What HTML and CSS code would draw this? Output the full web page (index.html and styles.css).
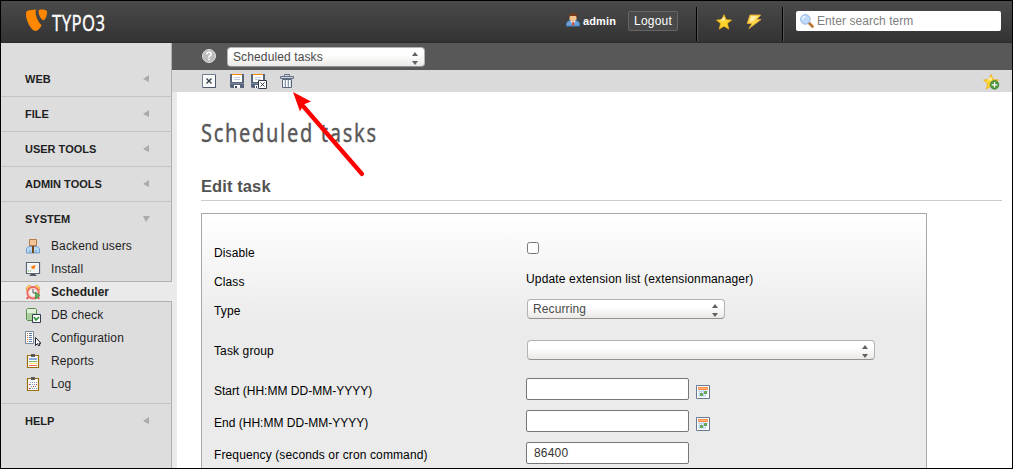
FILE: index.html
```html
<!DOCTYPE html>
<html lang="en">
<head>
<meta charset="utf-8">
<title>TYPO3 - Scheduled tasks</title>
<link rel="stylesheet" href="styles.css">
</head>
<body>
<div class="frame">
  <header class="topbar">
    <div class="logo">
      <svg class="logo-mark" width="22" height="23" viewBox="0 0 22 23"><path fill="#ff8700" d="M10.6.6C9.8 1.200 9.600 2.200 9.600 3.700c0 4 3.500 10.500 6 12.600-1.500 3-3.800 5.700-6 5.700C5 22 0 11.500 0 5.500c0-2 .3-2.800.9-3.400C2.500 1.300 7 .7 10.600.6zM12.500 2.500c0-1.300.5-2 2-2 3.500 0 6.600.6 6.600 2.500 0 3.500-2 8.300-3.700 8.300-2 0-4.900-5.600-4.900-8.800z"/></svg>
      <span class="logo-name">TYPO3</span>
    </div>
    <div class="user">
      <svg width="14" height="14" viewBox="0 0 14 14"><path d="M.5 13v-2.500Q1 8 4.500 7.500h5Q13 8 13.500 10.500V13z" fill="#6ba2da" stroke="#4a82bd"/><path d="M4.500 8h5L7 12z" fill="#eaf3ff"/><path d="M6.500 8.500h1.300l.5 3L7 13l-1-1.500z" fill="#e24830"/><path d="M3.500 3h7v3.300q-1 2.200-3.500 2.200T3.500 6.300z" fill="#f1c08b"/><path d="M3 5V2q1-2 4-2t4 2v3l-1-2.200H4z" fill="#7b3a16"/></svg>
      <span class="user-name">admin</span>
      <button class="logout">Logout</button>
    </div>
    <div class="shortcuts">
      <svg width="16" height="16" viewBox="0 0 16 16"><path d="M8 .7l2.100 5 5.400.4-4.100 3.500 1.400 5.500L8 12.200l-4.800 2.900 1.400-5.500L.5 6.100l5.400-.4z" fill="#ffd52e" stroke="#efad18" stroke-width=".8"/><path d="M8 2.500l1.400 4H4z" fill="#ffef96"/></svg>
      <svg width="16" height="16" viewBox="0 0 16 16"><path d="M4 1h10.500L10.800 5.500h4.200L3 14.500 6 9.500H1.200z" fill="#ffd84c" stroke="#dea83b"/><path d="M5 2.300h6.500L7.500 6.500 3.500 8z" fill="#ffeeae"/></svg>
    </div>
    <label class="search">
      <svg width="14" height="14" viewBox="0 0 14 14"><path d="M9 9l3.500 3.500" stroke="#b97632" stroke-width="2.600" stroke-linecap="round"/><circle cx="5.400" cy="5.400" r="4.800" fill="#c0dafa" stroke="#93b6df"/><path d="M2.500 5.500q0-3 3-3" stroke="#edf6ff" stroke-width="1.500" fill="none"/></svg>
      <input type="text" placeholder="Enter search term">
    </label>
  </header>

  <div class="body">
    <nav class="menu">
      <div class="group"><span>WEB</span><i class="arrow left"></i></div>
      <div class="group"><span>FILE</span><i class="arrow left"></i></div>
      <div class="group"><span>USER TOOLS</span><i class="arrow left"></i></div>
      <div class="group"><span>ADMIN TOOLS</span><i class="arrow left"></i></div>
      <div class="group open"><span>SYSTEM</span><i class="arrow down"></i></div>
      <ul class="modules">
        <li><svg width="16" height="16" viewBox="0 0 16 16"><path d="M1.500 15V10.500l2-2h9l2 2V15z" fill="#b6d8f4" stroke="#729fc9"/><path d="M7 8h2v7H7z" fill="#754813"/><path d="M4.500 1.500h7v6h-7z" fill="#f1c597" stroke="#b87b45"/><path d="M5 12v3M11 12v3" stroke="#729fc9"/></svg>Backend users</li>
        <li><svg width="16" height="16" viewBox="0 0 16 16"><path d="M1.500 1.500h13v11h-13z" fill="#fff" stroke="#596275" stroke-width="1.200"/><path d="M3 3h10v8H3z" fill="#eef2f5"/><path d="M6 5.500l4.500-1.500-1.200 4.500-1.300-1.500-1 1.500-.5-2z" fill="#ff7900"/><path d="M3 10h1M5 10h1" stroke="#60b342"/><path d="M6 13h4l2 2H4z" fill="#525a65"/></svg>Install</li>
        <li class="current"><svg width="16" height="16" viewBox="0 0 16 16"><path d="M1 4l3-3 3 2-5 4zM15 4l-3-3-3 2 5 4z" fill="#ffd36e" stroke="#db982c" stroke-width=".7"/><path d="M3 13l-1 2M13 13l1 2" stroke="#d65449" stroke-width="2"/><circle cx="8" cy="8.700" r="5.700" fill="#fff" stroke="#ed6a60" stroke-width="2"/><circle cx="8" cy="8.700" r="4.300" fill="#f4f2ee" stroke="#f6b5ad" stroke-width=".7"/><path d="M8 5v4h3" fill="none" stroke="#50545d"/><path d="M10.500 8l4.500 3.500-4.500 3.500z" fill="#63b05d" stroke="#338d3b" stroke-width=".7"/></svg>Scheduler</li>
        <li><svg width="16" height="16" viewBox="0 0 16 16"><path d="M1.500 2.500l1-1h8l1 1v11H2.500l-1-1z" fill="#abcf9b" stroke="#5c8e4f"/><path d="M2 2h9v4H2z" fill="#dfefda"/><path d="M7.500 7.500h8v8h-8z" fill="#fff" stroke="#343d4d"/><path d="M9 10l2 3 3-3" stroke="#279234" stroke-width="1.500" fill="none"/></svg>DB check</li>
        <li><svg width="16" height="16" viewBox="0 0 16 16"><path d="M.5 1.500h8v12h-8z" fill="#fff" stroke="#7c879d"/><path d="M2 3.500h1M2 5.500h1M2 7.500h1M2 9.500h1M2 11.500h1" stroke="#e98127"/><path d="M4 3.500h3M4 5.500h3M4 7.500h3M4 9.500h3M4 11.500h3" stroke="#647ba9"/><path d="M10.500 7.500v8l2-2 1 2.500 1.500-.7-1-2h2z" fill="#fff" stroke="#202531"/></svg>Configuration</li>
        <li><svg width="16" height="16" viewBox="0 0 16 16"><path d="M2.500 2.500h11v12h-11z" fill="#fff" stroke="#9a6f0d" stroke-width="1.200"/><path d="M6 1h4v3H6z" fill="#565a5c"/><path d="M4 6h8" stroke="#8eabe0" stroke-width="2"/><path d="M4 8.500h8" stroke="#70b469"/><path d="M4 10.500h8" stroke="#ffe067"/><path d="M4 12.500h8" stroke="#ee6758"/></svg>Reports</li>
        <li><svg width="16" height="16" viewBox="0 0 16 16"><path d="M2.500 2.500h11v12h-11z" fill="#fff" stroke="#9a6f0d" stroke-width="1.200"/><path d="M6 1h4v3H6z" fill="#565a5c"/><path d="M5 6.500h7M5 8.500h5M6 10.500h6M5 12.500h7" stroke="#8293ae" stroke-dasharray="1 1"/><path d="M4 8.500h1M4 12.500h1M11 8.500h1M8 10.500h1" stroke="#db2821"/></svg>Log</li>
      </ul>
      <div class="group help"><span>HELP</span><i class="arrow left"></i></div>
    </nav>

    <main class="module">
      <div class="bar bar-select">
        <svg width="14" height="14" viewBox="0 0 14 14"><circle cx="7" cy="7" r="6.500" fill="#bdbdbd" stroke="#dedede"/><path d="M4.800 5.300q0-2 2.200-2t2.200 1.800Q9.200 6.500 7 7.500v1M7 9.600v1.600" fill="none" stroke="#fff" stroke-width="1.500"/></svg>
        <div class="select function"><span>Scheduled tasks</span><i class="spin"></i></div>
      </div>
      <div class="bar bar-buttons">
        <svg class="close" width="14" height="14" viewBox="0 0 14 14"><path d="M.5.5h13v13H.5z" fill="#f9fafb" stroke="#737e94"/><path d="M13.500 1v12.500H1" fill="none" stroke="#4d586d"/><path d="M4.500 4.500l5 5M9.500 4.500l-5 5" stroke="#363d49" stroke-width="1.300"/></svg>
        <svg class="save" width="14" height="14" viewBox="0 0 14 14"><path d="M0 0h14v14H1l-1-1z" fill="#59657b"/><path d="M2 0h10v8H2z" fill="#fff"/><path d="M2 .5h10" stroke="#ff8700"/><path d="M4 3.500h6M4 5.500h6" stroke="#c1cad8"/><path d="M4 11h6v3H4z" fill="#fff"/><path d="M5 12h2v2H5z" fill="#39455a"/><path d="M0 9.500h14" stroke="#7986a0"/></svg>
        <svg class="save-close" width="16" height="15" viewBox="0 0 16 15"><path d="M0 0h14v14H1l-1-1z" fill="#59657b"/><path d="M2 0h10v8H2z" fill="#fff"/><path d="M2 .5h10" stroke="#ff8700"/><path d="M4 3.500h6M4 5.500h6" stroke="#c1cad8"/><path d="M4 11h5v3H4z" fill="#fff"/><path d="M5 12h1v2H5z" fill="#39455a"/><path d="M0 9.500h8" stroke="#7986a0"/><path d="M7.500 6.500h8v8h-8z" fill="#fff" stroke="#343d4d"/><path d="M9.500 8.500l4 4M13.500 8.500l-4 4" stroke="#343d4d"/></svg>
        <svg class="trash" width="14" height="14" viewBox="0 0 14 14"><path d="M4.500 2V.5h5V2" fill="none" stroke="#626f87"/><path d="M.5 2.500h13v2H.5z" fill="#c8d0dc" stroke="#647189"/><path d="M2.500 5.500h9v8h-9z" fill="#fff" stroke="#59657b"/><path d="M5.500 6v7M8.500 6v7" stroke="#8d98aa"/><path d="M4.500 6v7M7.500 6v7M10.500 6v7" stroke="#d9dfe7"/></svg>
        <svg class="bookmark" width="17" height="16" viewBox="0 0 17 16"><path d="M8 .6l2.100 5 5.400.4-4.100 3.500 1.400 5.500L8 12.200 3.200 15l1.400-5.500L.5 6l5.400-.4z" fill="#ffd52e" stroke="#efad18" stroke-width=".8"/><path d="M8 2.500l1.400 4H4z" fill="#ffef96"/><circle cx="11.500" cy="10.800" r="4.400" fill="#4f963f" stroke="#3c792f" stroke-width=".6"/><path d="M11.500 8v5.600M8.700 10.800h5.600" stroke="#fff" stroke-width="1.300"/></svg>
      </div>
      <section class="content">
        <h1><span>Scheduled tasks</span></h1>
        <h2>Edit task</h2>
        <form class="panel">
          <div class="row"><label>Disable</label><div class="cell"><input class="check" type="checkbox"></div></div>
          <div class="row"><label>Class</label><div class="cell"><span class="class-name">Update extension list (extensionmanager)</span></div></div>
          <div class="row type"><label>Type</label><div class="cell"><div class="select"><span>Recurring</span><i class="spin"></i></div></div></div>
          <div class="row tall task-group"><label>Task group</label><div class="cell"><div class="select wide"><span></span><i class="spin"></i></div></div></div>
          <div class="row tall"><label class="date">Start (HH:MM DD-MM-YYYY)</label><div class="cell"><input class="field" type="text"><svg class="calendar" width="14" height="14" viewBox="0 0 14 14"><path d="M.5.5h13v13H.5z" fill="#fff" stroke="#667792"/><path d="M2 6.500h10M2 8.500h10M2 10.500h8M3.500 5v7M5.500 5v7M7.500 5v7M9.500 5v7" stroke="#bad6f6"/><path d="M2 2h10v3H2z" fill="#ff8a46"/><path d="M2 3.500h10" stroke="#ffb27f"/><path d="M8 6h3v3H8zM4 8h3v3H4z" fill="#65aa57"/></svg></div></div>
          <div class="row tall"><label class="date">End (HH:MM DD-MM-YYYY)</label><div class="cell"><input class="field" type="text"><svg class="calendar" width="14" height="14" viewBox="0 0 14 14"><path d="M.5.5h13v13H.5z" fill="#fff" stroke="#667792"/><path d="M2 6.500h10M2 8.500h10M2 10.500h8M3.500 5v7M5.500 5v7M7.500 5v7M9.500 5v7" stroke="#bad6f6"/><path d="M2 2h10v3H2z" fill="#ff8a46"/><path d="M2 3.500h10" stroke="#ffb27f"/><path d="M8 6h3v3H8zM4 8h3v3H4z" fill="#65aa57"/></svg></div></div>
          <div class="row tall"><label>Frequency (seconds or cron command)</label><div class="cell"><input class="field" type="text" value="86400"></div></div>
        </form>
      </section>
      <svg class="pointer" width="76" height="88" viewBox="0 0 76 88"><path d="M11 14L70 82" stroke="#f00" stroke-width="4.200" stroke-linecap="round"/><path d="M1 0L19 9.500 11.500 12.500 8 19.500z" fill="#f00"/></svg>
    </main>
  </div>
</div>
</body>
</html>
```
FILE: styles.css
```css
* { box-sizing: border-box; }
body {
  margin: 0;
  overflow: hidden;
  font: 12px/16px "Liberation Sans", Arial, sans-serif;
  letter-spacing: .12px;
  color: #000;
}
svg { display: block; flex: none; }
.frame {
  display: flex;
  flex-direction: column;
  width: 1013px;
  height: 469px;
  border: 1px solid #000;
  overflow: hidden;
}

/* Top bar */
.topbar {
  display: flex;
  flex: none;
  align-items: flex-start;
  height: 42px;
  padding-left: 25px;
  background: linear-gradient(#4a4a4a, #343434 95%, #292929);
}
.logo { display: flex; width: 540px; padding-top: 8px; }
.logo-name {
  height: 28px;
  margin-left: 4px;
  font: 22.5px/28px "Noto Sans", sans-serif;
  letter-spacing: .6px;
  color: #fff;
  -webkit-text-stroke: .3px #fff;
  transform: scaleX(.74);
  transform-origin: 0 0;
}
.user { display: flex; width: 130px; padding-top: 10px; }
.user svg { margin-top: 2px; }
.user-name {
  width: 45px;
  margin-left: 3px;
  padding-top: 2px;
  font-size: 11px;
  font-weight: bold;
  color: #fff;
}
.logout {
  width: 50px;
  height: 20px;
  padding: 0;
  border: 1px solid #666;
  border-radius: 2px;
  background: #494949;
  color: #fff;
  font: 12px "Liberation Sans", sans-serif;
  letter-spacing: .2px;
}
.shortcuts {
  display: flex;
  gap: 14px;
  width: 87px;
  height: 34px;
  margin-top: 6px;
  padding: 7px 0 0 19px;
  border-left: 1px solid #000;
  border-right: 1px solid #000;
  box-shadow: inset 1px 0 #555, 1px 0 #555;
}
.search {
  display: flex;
  width: 205px;
  height: 20px;
  margin: 10px 0 0 13px;
  padding: 3px 4px;
  border-radius: 2px;
  background: #fff;
}
.search input {
  width: 170px;
  height: 14px;
  margin-left: 3px;
  padding: 0;
  border: 0;
  font: 12px "Liberation Sans", sans-serif;
  letter-spacing: .06px;
}
.search input::placeholder { color: #808080; }

/* Module menu */
.body { display: flex; flex: 1; min-height: 0; }
.menu {
  width: 171px;
  flex: none;
  padding-top: 19px;
  border-right: 1px solid #b0b0b0;
  background: #ddd;
}
.group {
  display: flex;
  align-items: center;
  justify-content: space-between;
  height: 35px;
  padding: 0 21px 0 24px;
  border-bottom: 1px solid #c3c3c3;
  color: #1f1f1f;
  font-size: 11px;
  font-weight: bold;
  letter-spacing: 0;
}
.group.open { height: 32px; padding-top: 2px; border-bottom: 0; }
.group.help { border-top: 1px solid #c3c3c3; border-bottom: 0; }
.arrow { width: 0; height: 0; }
.arrow.left { margin: 0 1px 2px 0; border: solid transparent; border-width: 4px 6px 3px 0; border-right-color: #aaa; }
.arrow.down { border: 4px solid transparent; border-top: 6px solid #aaa; border-bottom: 0; border-left-width: 3px; }
.modules {
  margin: 0;
  padding: 0;
  height: 169px;
  list-style: none;
}
.modules li {
  display: flex;
  align-items: center;
  gap: 10px;
  height: 23px;
  padding-left: 24px;
  color: #1f1f1f;
}
.modules .current {
  width: 171px;
  height: 21px;
  margin: 1px 0;
  border: solid #b0b0b0;
  border-width: 1px 0;
  background: #eaeaea;
  font-weight: bold;
  letter-spacing: 0;
}

/* Module area */
.module {
  position: relative;
  flex: 1;
  background: #fff;
}
.bar { display: flex; }
.bar-select { height: 27px; padding: 4px 0 0 30px; background: #585858; }
.bar-select > svg { margin: 2px 11px 0 0; }
.bar-buttons { height: 22px; padding: 4px 12px 0 30px; background: #dadada; }
.save { margin-left: 14px; }
.save-close { margin-left: 7px; }
.trash { margin-left: 13px; }
.bookmark { margin-left: auto; }
.select {
  display: flex;
  justify-content: space-between;
  width: 198px;
  height: 20px;
  padding: 1px 6px 0 5px;
  border: 1px solid #b5b3b0;
  border-bottom-color: #94918e;
  border-radius: 4px;
  background: linear-gradient(#fff 35%, #ebe9e7);
  color: #4a4a4a;
}
.select.wide { width: 348px; }
.spin {
  display: flex;
  flex-direction: column;
  justify-content: space-between;
  width: 6px;
  height: 13px;
  margin-top: 3px;
}
.spin::before { content: ""; border: 3px solid transparent; border-top: 0; border-bottom: 4px solid #606060; }
.spin::after { content: ""; border: 3px solid transparent; border-bottom: 0; border-top: 4px solid #606060; }

.content {
  height: 376px;
  padding: 24px 10px 0 24px;
  border-left: 5px solid #eaeaea;
  overflow: hidden;
}
h1 {
  height: 34px;
  margin: 0;
  color: #585858;
  font: 26px/32px "Noto Sans", sans-serif;
}
h1 span {
  display: inline-block;
  letter-spacing: 2.2px;
  white-space: nowrap;
  -webkit-text-stroke: .4px #585858;
  transform: scaleX(.77);
  transform-origin: 0 0;
}
h2 {
  height: 51px;
  margin: 0 0 12px;
  padding-top: 26px;
  border-bottom: 1px solid #ccc;
  color: #525252;
  font-size: 16.5px;
  line-height: 20px;
  letter-spacing: .1px;
}
.panel {
  width: 726px;
  height: 280px;
  padding: 24px 0 0 12px;
  border: 1px solid #a9a9a9;
  background: linear-gradient(#fff, #ebebeb 110px);
}
.row { display: flex; height: 29px; }
.row label { width: 312px; padding-top: 7px; }
.row label.date { letter-spacing: .01px; }
.row.tall { height: 32px; }
.row.task-group { margin: 10px 0 8px; }
.row.tall label { padding-top: 8px; }
.cell { display: flex; padding-top: 3px; }
.check { width: 12px; height: 12px; margin: 1px; }
.class-name { padding-top: 1px; letter-spacing: .15px; }
.row .select { margin-left: 1px; }
.task-group .cell { padding-top: 5px; }
.field {
  width: 163px;
  height: 22px;
  padding: 0 7px;
  border: 1px solid #777;
  border-radius: 2px;
  color: #333;
  background: #fff;
  font: 12px "Liberation Sans", sans-serif;
  letter-spacing: .2px;
}
.calendar { margin: 7px 0 0 7px; }

/* Callout arrow over the page */
.pointer { position: absolute; left: 120px; top: 49px; }
```
